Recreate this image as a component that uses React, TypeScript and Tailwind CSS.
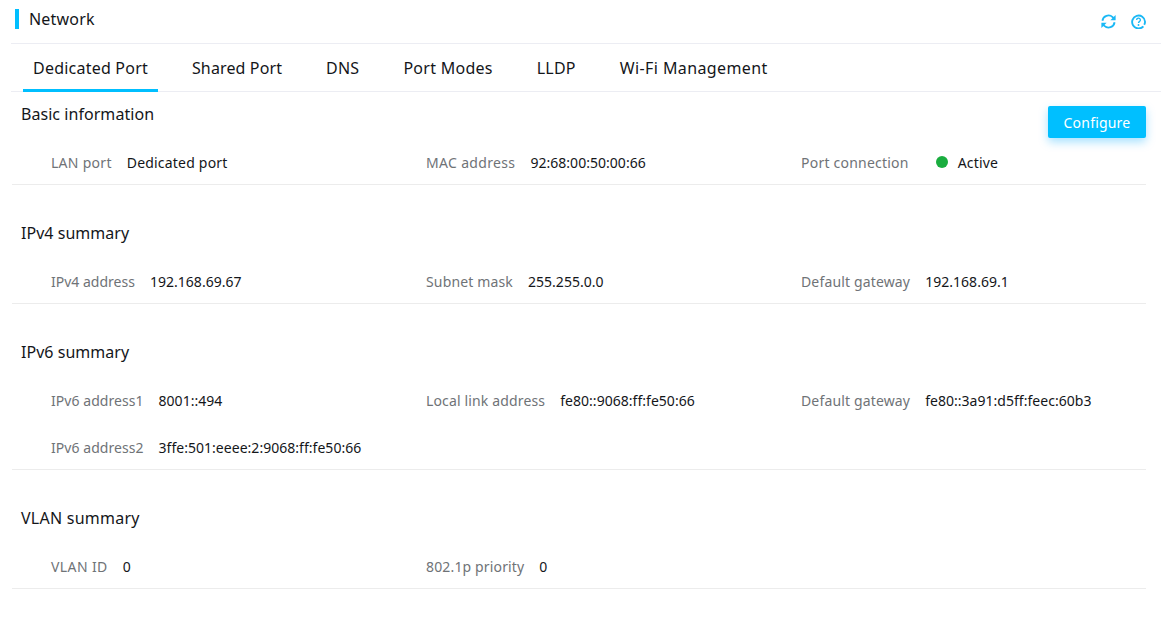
import React from "react";

type Item = { label: string; value: string; status?: boolean; wide?: boolean; track?: string };

function Field({ item }: { item: Item }) {
  return (
    <div className="flex w-[375px] h-[42px] items-center pl-[39px] text-[14px] whitespace-nowrap">
      <span className={"text-[#6f7377] mr-[15px] " + (item.track ?? "tracking-[0.15px]")}>{item.label}</span>
      {item.status && <span className="w-3 h-3 rounded-full bg-[#1aad3f] mr-[10px] ml-[12px]" />}
      <span className={"text-[#14161a] " + (item.wide ? "tracking-[0.2px]" : "tracking-[0.03px]")}>{item.value}</span>
    </div>
  );
}

function Section({ title, rows, first, track }: { title: string; rows: Item[][]; first?: boolean; track?: string }) {
  return (
    <section className={first ? "" : "mt-[26px]"}>
      <div className="relative">
        <h2 className={"h-[44px] pl-[9px] flex items-center text-[16px] text-[#14161a] font-normal " + (track ?? "tracking-[0.08px]")}>{title}</h2>
        {first && (
          <button className="absolute right-0 top-[14px] w-[98px] h-8 bg-[#00bfff] rounded-[2px] text-white text-[14px] tracking-[0.2px] shadow-[0_4px_10px_rgba(0,170,255,0.35)]">
            Configure
          </button>
        )}
      </div>
      <div className="border-b border-[#ececec] pt-[5px] pb-[1px] flex flex-col gap-[5px]">
        {rows.map((r, i) => (
          <div key={i} className="flex">
            {r.map((it) => (
              <Field key={it.label} item={it} />
            ))}
          </div>
        ))}
      </div>
    </section>
  );
}

const tabs = [
  { t: "Dedicated Port", c: "tracking-[0.22px]" },
  { t: "Shared Port", c: "tracking-[0.13px]" },
  { t: "DNS", c: "tracking-[0.22px]" },
  { t: "Port Modes", c: "tracking-[0.27px]" },
  { t: "LLDP", c: "tracking-[0.22px]" },
  { t: "Wi-Fi Management", c: "tracking-[0.4px]" },
];

export default function App() {
  return (
    <div className="w-[1172px] h-[638px] bg-white pl-3 pr-[11px] overflow-hidden font-['Noto_Sans','Open_Sans',sans-serif]">
      <header className="h-[44px] border-b border-[#ecedf3] flex items-center justify-between -ml-px pl-[4px] pr-[15px]">
        <div className="flex items-center -mt-[5px]">
          <span className="w-1 h-5 bg-[#00bfff] mr-[10px]" />
          <span className="text-[16px] text-[#14161a] tracking-[0.2px]">Network</span>
        </div>
        <div className="flex items-center gap-[15px] text-[#1ab8f5] -mt-[1px]">
          <svg width="15" height="15" viewBox="0 0 16 16" fill="none" stroke="currentColor" strokeWidth="1.9">
            <path d="M1.5 7.2A6.5 6.5 0 0 1 12.4 3.4L13.8 4.8" />
            <path d="M15.6 1v5.6H10z" fill="currentColor" stroke="none" />
            <path d="M14.5 8.8A6.5 6.5 0 0 1 3.6 12.6L2.2 11.2" />
            <path d="M.4 15V9.4H6z" fill="currentColor" stroke="none" />
          </svg>
          <svg width="15" height="15" viewBox="0 0 16 16" fill="none" stroke="currentColor">
            <path d="M13.2 13.2A6.9 6.9 0 1 1 15 8.2c0 1.2-.3 2.2-.9 3.2" strokeWidth="2" />
            <path d="M6 6.4A2 2 0 1 1 9 8.1c-.7.4-1 .8-1 1.5" strokeWidth="1.4" />
            <circle cx="8" cy="11.7" r="1" fill="currentColor" stroke="none" />
          </svg>
        </div>
      </header>
      <nav className="h-[48px] border-b border-[#ecedf3] flex -ml-px pl-3 text-[16px] text-[#14161a]">
        {tabs.map((x, i) => (
          <div
            key={x.t}
            className={
              "h-[48px] px-[10px] mr-[24px] flex items-center pb-[1px] whitespace-nowrap " +
              x.c +
              (i === 0 ? " border-b-[3px] border-[#00bfff] pt-[3px]" : "")
            }
          >
            {x.t}
          </div>
        ))}
      </nav>
      <div className="mr-[15px]">
        <Section
          first
          title="Basic information"
          track="tracking-[0.05px]"
          rows={[[
            { label: "LAN port", value: "Dedicated port", wide: true, track: "tracking-[0.28px]" },
            { label: "MAC address", value: "92:68:00:50:00:66", track: "tracking-[0.33px]" },
            { label: "Port connection", value: "Active", status: true, wide: true, track: "tracking-[0.22px]" },
          ]]}
        />
        <Section
          title="IPv4 summary"
          track="tracking-[0.03px]"
          rows={[[
            { label: "IPv4 address", value: "192.168.69.67", track: "tracking-[0px]" },
            { label: "Subnet mask", value: "255.255.0.0" },
            { label: "Default gateway", value: "192.168.69.1" },
          ]]}
        />
        <Section
          title="IPv6 summary"
          track="tracking-[0.03px]"
          rows={[
            [
              { label: "IPv6 address1", value: "8001::494", track: "tracking-[0.05px]" },
              { label: "Local link address", value: "fe80::9068:ff:fe50:66" },
              { label: "Default gateway", value: "fe80::3a91:d5ff:feec:60b3" },
            ],
            [{ label: "IPv6 address2", value: "3ffe:501:eeee:2:9068:ff:fe50:66", track: "tracking-[0.05px]" }],
          ]}
        />
        <Section
          title="VLAN summary"
          track="tracking-[0.25px]"
          rows={[[
            { label: "VLAN ID", value: "0", track: "tracking-[0.4px]" },
            { label: "802.1p priority", value: "0" },
          ]]}
        />
      </div>
    </div>
  );
}
